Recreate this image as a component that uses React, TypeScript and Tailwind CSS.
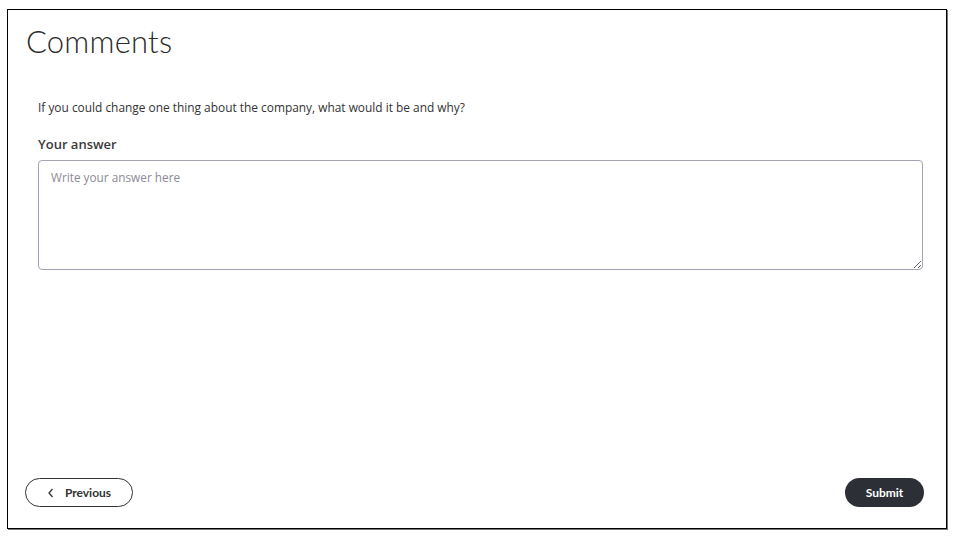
import React from "react";

export default function App() {
  return (
    <div className="w-[958px] h-[545px] bg-white pt-[9px] pl-[7px]" style={{ fontFamily: "Lato, 'Open Sans', sans-serif" }}>
      <div className="w-[940px] h-[520px] border border-black shadow-[1px_1px_0_#777] flex flex-col">
        <h1 className="ml-[18px] mt-[13px] text-[31px] leading-[36px] font-light text-[#2b2b2b] tracking-[0.2px]">Comments</h1>
        <div className="px-[30px] flex flex-col" style={{ fontFamily: "'Open Sans', sans-serif" }}>
          <p className="mt-[41px] text-[11.9px] leading-[15px] text-[#333]">If you could change one thing about the company, what would it be and why?</p>
          <label className="mt-[21px] text-[13px] leading-[16px] font-semibold text-[#3a3a3a]">Your answer</label>
          <textarea
            className="mt-[8px] w-[885px] h-[110px] border border-[#a7a3b5] rounded-[4px] px-[12px] py-[9px] text-[11.8px] leading-[15px] text-[#333] placeholder:text-[#8b8a95] outline-none"
            placeholder="Write your answer here"
          />
        </div>
        <div className="mt-auto mb-[21px] flex justify-between pl-[17px] pr-[22px]">
          <button className="w-[108px] h-[29px] rounded-full border border-[#333] flex items-center justify-center gap-[10px] text-[12px] font-bold text-[#333]">
            <svg width="8" height="10" viewBox="0 0 8 10" fill="none" stroke="#333" strokeWidth="1.3">
              <path d="M5.5 1 L2 5 L5.5 9" />
            </svg>
            Previous
          </button>
          <button className="w-[79px] h-[29px] rounded-full bg-[#2d2f37] text-white text-[12px] font-bold">Submit</button>
        </div>
      </div>
    </div>
  );
}
